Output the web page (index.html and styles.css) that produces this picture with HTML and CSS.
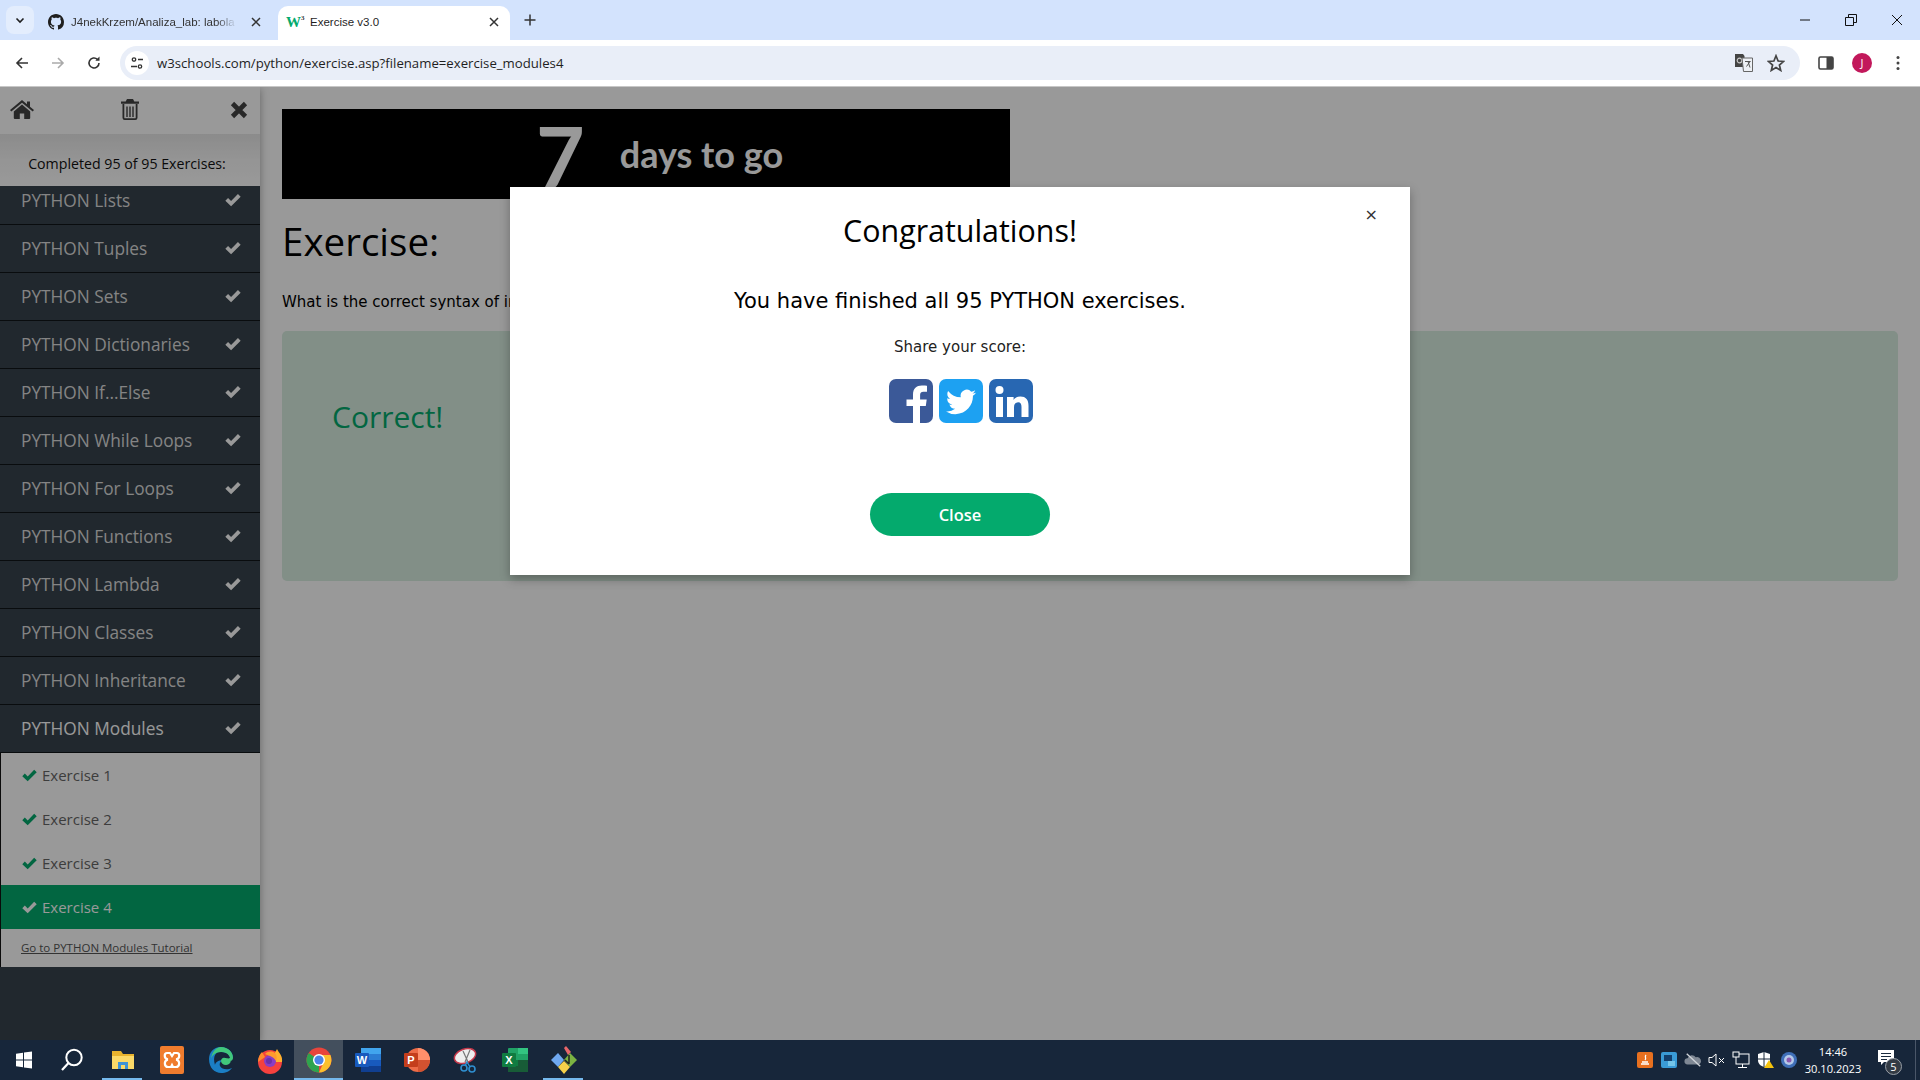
FILE: index.html
```html
<!DOCTYPE html>
<html lang="en">
<head>
<meta charset="utf-8">
<title>Exercise v3.0</title>
<link rel="stylesheet" href="styles.css">
</head>
<body>
<svg class="defs" width="0" height="0" aria-hidden="true">
  <symbol id="check" viewBox="0 0 16 16"><path d="M1.2 8.6 3.6 6.2 6.3 8.9 12.4 2.6 14.8 5 6.3 13.5z" fill="currentColor"/></symbol>
</svg>
<div class="tabbar">
  <div class="tab-expand"><svg width="12" height="12" viewBox="0 0 12 12"><path d="M2.5 4.5 6 8l3.5-3.5" fill="none" stroke="#1f1f1f" stroke-width="1.6"/></svg></div>
  <div class="tab tab-first">
    <svg class="fav" width="16" height="16" viewBox="0 0 16 16"><path fill="#1f1f1f" d="M8 0C3.58 0 0 3.58 0 8c0 3.54 2.29 6.53 5.47 7.59.4.07.55-.17.55-.38 0-.19-.01-.82-.01-1.49-2.01.37-2.53-.49-2.69-.94-.09-.23-.48-.94-.82-1.13-.28-.15-.68-.52-.01-.53.63-.01 1.08.58 1.23.82.72 1.21 1.87.87 2.33.66.07-.52.28-.87.51-1.07-1.78-.2-3.64-.89-3.64-3.95 0-.87.31-1.59.82-2.15-.08-.2-.36-1.02.08-2.12 0 0 .67-.21 2.2.82.64-.18 1.32-.27 2-.27.68 0 1.36.09 2 .27 1.53-1.04 2.2-.82 2.2-.82.44 1.1.16 1.92.08 2.12.51.56.82 1.27.82 2.15 0 3.07-1.87 3.75-3.65 3.95.29.25.54.73.54 1.48 0 1.07-.01 1.93-.01 2.2 0 .21.15.46.55.38A8.013 8.013 0 0 0 16 8c0-4.42-3.58-8-8-8z"/></svg>
    <span class="tab-title fade">J4nekKrzem/Analiza_lab: labola</span>
    <svg class="tab-x" width="12" height="12" viewBox="0 0 12 12"><path d="M2 2l8 8M10 2l-8 8" stroke="#333" stroke-width="1.5"/></svg>
  </div>
  <div class="tab tab-active">
    <span class="w3fav">W<sup>3</sup></span>
    <span class="tab-title">Exercise v3.0</span>
    <svg class="tab-x" width="12" height="12" viewBox="0 0 12 12"><path d="M2 2l8 8M10 2l-8 8" stroke="#333" stroke-width="1.5"/></svg>
  </div>
  <svg class="tab-plus" width="14" height="14" viewBox="0 0 14 14"><path d="M7 1.5v11M1.5 7h11" stroke="#333" stroke-width="1.5"/></svg>
  <div class="win-controls">
    <svg width="14" height="14" viewBox="0 0 14 14"><path d="M2 7h10" stroke="#111" stroke-width="1"/></svg>
    <svg width="14" height="14" viewBox="0 0 14 14"><path d="M1.5 4.5h8v8h-8zM4.5 4.5v-3h8v8h-3" fill="none" stroke="#111"/></svg>
    <svg width="14" height="14" viewBox="0 0 14 14"><path d="M2 2l10 10M12 2 2 12" stroke="#111"/></svg>
  </div>
</div>
<div class="toolbar">
  <div class="nav-btns">
    <svg width="16" height="16" viewBox="0 0 16 16"><path d="M14 8H3M8 3 3 8l5 5" fill="none" stroke="#333" stroke-width="1.6"/></svg>
    <svg width="16" height="16" viewBox="0 0 16 16"><path d="M2 8h11M8 3l5 5-5 5" fill="none" stroke="#aaa" stroke-width="1.6"/></svg>
    <svg width="16" height="16" viewBox="0 0 16 16"><path d="M13 8a5 5 0 1 1-1.6-3.7" fill="none" stroke="#333" stroke-width="1.6"/><path d="M13.5 1.5v4.2H9.3z" fill="#333"/></svg>
  </div>
  <div class="omnibox">
    <span class="site-icon"><svg width="14" height="14" viewBox="0 0 14 14"><circle cx="4" cy="3.5" r="1.7" fill="none" stroke="#333" stroke-width="1.3"/><path d="M8 3.5h5M1 10.5h6" stroke="#333" stroke-width="1.4"/><circle cx="10" cy="10.5" r="1.7" fill="none" stroke="#333" stroke-width="1.3"/></svg></span>
    <span class="url">w3schools.com/python/exercise.asp?filename=exercise_modules4</span>
    <svg class="translate" width="18" height="18" viewBox="0 0 18 18"><path d="M0 0h8l1.500 2v11H0z" fill="#444"/><circle cx="4.500" cy="6.500" r="2.300" fill="none" stroke="#ccc" stroke-width="1.200"/><path d="M7 4h10.500v13.500H8.500z" fill="#eef1f6" stroke="#666"/><path d="M10 7.500h5.500M13 7.500l2 6M15 7.500l-3.500 5" stroke="#555" fill="none"/></svg>
    <svg class="star" width="18" height="18" viewBox="0 0 18 18"><path d="M9 1.800 11.100 7l5.500.4-4.200 3.600 1.300 5.400L9 13.500 4.300 16.400l1.300-5.400L1.400 7.400 6.900 7z" fill="none" stroke="#444" stroke-width="1.700"/></svg>
  </div>
  <div class="tool-right">
    <svg width="16" height="16" viewBox="0 0 16 16"><rect x="1" y="2" width="14" height="12" rx="1.500" fill="none" stroke="#444" stroke-width="1.600"/><rect x="8.500" y="2" width="6.500" height="12" fill="#444"/></svg>
    <span class="avatar">J</span>
    <svg width="16" height="16" viewBox="0 0 16 16"><circle cx="8" cy="2.500" r="1.500" fill="#444"/><circle cx="8" cy="8" r="1.500" fill="#444"/><circle cx="8" cy="13.500" r="1.500" fill="#444"/></svg>
  </div>
</div>
<div class="page">
  <aside class="sidebar">
    <div class="side-icons">
      <svg width="24" height="20" viewBox="0 0 24 20"><path fill="#444" d="M12 4.600 3.800 11.400V18a1 1 0 0 0 1 1h5v-5.500h4.400V19h5a1 1 0 0 0 1-1v-6.600z"/><path fill="#444" d="M12 0 0 10l1.300 1.500L12 2.700l10.700 8.800L24 10l-4-3.300V1.500h-3v2.700z"/></svg>
      <svg class="trash" width="18" height="21" viewBox="0 0 18 21"><path fill="#444" d="M6 0h6l1.300 2.500H18v2.200H0V2.500h4.700z"/><path fill="none" stroke="#444" stroke-width="1.800" d="M2.400 5v13.800c0 .8.600 1.300 1.300 1.300h10.600c.7 0 1.300-.5 1.300-1.300V5"/><path d="M6 7.500V18M9 7.500V18M12 7.500V18" stroke="#444" stroke-width="1.400"/></svg>
      <svg width="18" height="18" viewBox="0 0 18 18"><path d="M2.500 2.500l13 13M15.500 2.500l-13 13" stroke="#444" stroke-width="4.600"/></svg>
    </div>
    <div class="completed">Completed 95 of 95 Exercises:</div>
    <div class="nav-scroll">
      <div class="nav-list">
        <div class="nav-row"><span>PYTHON Lists</span><svg class="nav-check"><use href="#check"/></svg></div>
        <div class="nav-row"><span>PYTHON Tuples</span><svg class="nav-check"><use href="#check"/></svg></div>
        <div class="nav-row"><span>PYTHON Sets</span><svg class="nav-check"><use href="#check"/></svg></div>
        <div class="nav-row"><span>PYTHON Dictionaries</span><svg class="nav-check"><use href="#check"/></svg></div>
        <div class="nav-row"><span>PYTHON If...Else</span><svg class="nav-check"><use href="#check"/></svg></div>
        <div class="nav-row"><span>PYTHON While Loops</span><svg class="nav-check"><use href="#check"/></svg></div>
        <div class="nav-row"><span>PYTHON For Loops</span><svg class="nav-check"><use href="#check"/></svg></div>
        <div class="nav-row"><span>PYTHON Functions</span><svg class="nav-check"><use href="#check"/></svg></div>
        <div class="nav-row"><span>PYTHON Lambda</span><svg class="nav-check"><use href="#check"/></svg></div>
        <div class="nav-row"><span>PYTHON Classes</span><svg class="nav-check"><use href="#check"/></svg></div>
        <div class="nav-row"><span>PYTHON Inheritance</span><svg class="nav-check"><use href="#check"/></svg></div>
        <div class="nav-row nav-open"><span>PYTHON Modules</span><svg class="nav-check"><use href="#check"/></svg></div>
        <div class="sub">
          <div class="sub-row"><svg class="sub-check"><use href="#check"/></svg>Exercise 1</div>
          <div class="sub-row"><svg class="sub-check"><use href="#check"/></svg>Exercise 2</div>
          <div class="sub-row"><svg class="sub-check"><use href="#check"/></svg>Exercise 3</div>
          <div class="sub-row sub-active"><svg class="sub-check"><use href="#check"/></svg>Exercise 4</div>
          <a class="sub-link">Go to PYTHON Modules Tutorial</a>
        </div>
      </div>
    </div>
  </aside>
  <main class="main">
    <div class="banner"><span class="banner-num">7</span><span class="banner-text">days to go</span></div>
    <h2 class="heading">Exercise:</h2>
    <p class="question">What is the correct syntax of importing only the person1 dictionary of the "mymodule" module?</p>
    <div class="result"><span class="correct">Correct!</span></div>
  </main>
  <div class="overlay">
    <div class="modal">
      <span class="modal-x">×</span>
      <h3 class="modal-title">Congratulations!</h3>
      <p class="modal-sub">You have finished all 95 PYTHON exercises.</p>
      <p class="modal-share">Share your score:</p>
      <div class="share-icons">
        <svg width="44" height="44" viewBox="0 0 44 44"><rect width="44" height="44" rx="7" fill="#3b5998"/><path fill="#fff" d="M24 44V27h-6.500v-6.500H24v-5c0-6 3.600-9 8.800-9 2.500 0 4.500.2 5.200.3v6h-3.500c-2.800 0-3.400 1.300-3.400 3.300v4.400h6.600l-.9 6.500H31V44z"/></svg>
        <svg width="44" height="44" viewBox="0 0 44 44"><rect width="44" height="44" rx="7" fill="#1da1f2"/><g transform="translate(7 7) scale(1.875)"><path fill="#fff" d="M5.026 15c6.038 0 9.341-5.003 9.341-9.334 0-.14 0-.282-.006-.422A6.685 6.685 0 0 0 16 3.542a6.658 6.658 0 0 1-1.889.518 3.301 3.301 0 0 0 1.447-1.817 6.533 6.533 0 0 1-2.087.793A3.286 3.286 0 0 0 7.875 6.030a9.325 9.325 0 0 1-6.767-3.429 3.289 3.289 0 0 0 1.018 4.382A3.323 3.323 0 0 1 .64 6.575v.045a3.288 3.288 0 0 0 2.632 3.218 3.203 3.203 0 0 1-.865.115 3.230 3.230 0 0 1-.614-.057 3.283 3.283 0 0 0 3.067 2.277A6.588 6.588 0 0 1 .78 13.580a6.320 6.320 0 0 1-.78-.045A9.344 9.344 0 0 0 5.026 15z"/></g></svg>
        <svg width="44" height="44" viewBox="0 0 44 44"><rect width="44" height="44" rx="7" fill="#2867b2"/><circle cx="10.500" cy="11" r="4" fill="#fff"/><path fill="#fff" d="M7 18h7v20H7zM18 18h6.600v2.900c1.300-2 3.600-3.400 6.800-3.400 5.600 0 8.100 3.400 8.100 9.300V38h-7V28c0-2.900-1-4.700-3.300-4.700-2.500 0-4.200 1.800-4.200 4.900V38h-7z"/></svg>
      </div>
      <button class="close-btn">Close</button>
    </div>
  </div>
</div>
<footer class="taskbar">
  <div class="task-item">
    <svg class="win-logo" width="20" height="20" viewBox="0 0 20 20"><path fill="#fff" d="M2 3.800 9 2.800v6.700H2zM10 2.600 18 1.500v8H10zM2 10.500h7v6.700l-7-1zM10 10.500h8v8l-8-1.100z"/></svg>
  </div>
  <div class="task-item">
    <svg class="search-icon" width="26" height="26" viewBox="0 0 26 26"><circle cx="15" cy="10.500" r="7.700" fill="none" stroke="#fff" stroke-width="2"/><path d="M9.500 16 3 23" stroke="#fff" stroke-width="2.200"/></svg>
  </div>
  <div class="task-item task-open">
    <svg width="24" height="22" viewBox="0 0 24 22"><path fill="#e8b32e" d="M1 2h9l2 3h11v15H1z"/><path fill="#fbd968" d="M1 7h22v13H1z"/><path fill="#3f93d6" d="M7 20v-7h10v7h-3v-4h-4v4z"/></svg>
  </div>
  <div class="task-item">
    <svg width="24" height="28" viewBox="0 0 24 28"><rect width="24" height="28" rx="2" fill="#f07c2e"/><path d="M7 7h3l2 3 2-3h3c3 0 3 5 0 6v1c3 1 3 7-1 7h-3l-1-2-1 2H8c-4 0-4-6-1-7v-1C4 12 4 7 7 7z" fill="none" stroke="#fff" stroke-width="2.200"/></svg>
  </div>
  <div class="task-item">
    <svg width="26" height="28" viewBox="0 0 26 28"><path fill="#1b7ec4" d="M13 1C5 1 1 7 1 13c0 9 6 14 12 14 5 0 9-2 11-5-4 2-10 2-12-2-1-3 1-5 3-6-5 0-8 3-8 5C4 9 9 5 14 6c5 0 8 3 8 6h3C25 6 20 1 13 1z"/><path fill="#41c77b" d="M22 12c2 3 0 7-4 7-3 0-5-2-5-4 0-2 2-4 4-3 2 0 3 1 5 0zM13 1c7 0 12 5 12 11 0 1-1 3-3 3 1-3-1-9-9-9-5 0-9 3-10 7C4 6 8 1 13 1z"/></svg>
  </div>
  <div class="task-item">
    <svg width="26" height="28" viewBox="0 0 26 28"><circle cx="13" cy="16" r="12" fill="#f5413e"/><path d="M20 3c2 4 6 7 5 13H13z" fill="#ffb02e"/><path d="M1 16C1 11 3 8 5 6l3 5z" fill="#ff8a2e"/><circle cx="13" cy="15" r="6" fill="#8a3ec4"/><path d="M8 8c3-3 7-3 10-1 2 2 2 5 1 8-2-4-6-5-11-7z" fill="#ff9a2e"/><circle cx="12" cy="15" r="3" fill="#6e2fa8"/></svg>
  </div>
  <div class="task-item task-open task-current">
    <svg width="26" height="26" viewBox="0 0 26 26"><circle cx="13" cy="13" r="12.500" fill="#e8453c"/><path d="M13 13 2.200 19.300A12.500 12.500 0 0 1 2.700 6z" fill="#2da44e"/><path d="M13 13 13 25.500a12.500 12.500 0 0 1-10.800-6.200L7.500 13z" fill="#2da44e"/><path d="M13 8h11.400A12.500 12.500 0 0 1 13 25.500l5-11z" fill="#fbc02d"/><circle cx="13" cy="13" r="6" fill="#fff"/><circle cx="13" cy="13" r="4.600" fill="#4a84e8"/></svg>
  </div>
  <div class="task-item">
    <svg width="26" height="26" viewBox="0 0 26 26"><rect x="6" y="1" width="20" height="24" rx="1" fill="#2b7cd3"/><rect x="6" y="1" width="20" height="6" fill="#41a5ee"/><rect x="6" y="13" width="20" height="6" fill="#185abd"/><rect x="6" y="19" width="20" height="6" fill="#103f91"/><rect y="6" width="14" height="14" rx="1" fill="#185abd"/><text x="7" y="17" class="app-letter">W</text></svg>
  </div>
  <div class="task-item">
    <svg width="26" height="26" viewBox="0 0 26 26"><circle cx="14" cy="13" r="12" fill="#ed6c47"/><path d="M14 1a12 12 0 0 1 12 12H14z" fill="#ff8f6b"/><path d="M14 13h12a12 12 0 0 1-12 12z" fill="#d35230"/><rect y="6" width="14" height="14" rx="1" fill="#c43e1c"/><text x="7" y="17" class="app-letter">P</text></svg>
  </div>
  <div class="task-item">
    <svg width="26" height="28" viewBox="0 0 26 28"><ellipse cx="12" cy="10" rx="11" ry="7" fill="#eee" stroke="#c4384a" stroke-width="1.500" transform="rotate(-20 12 10)"/><path d="M10 5l5 11M17 4l-5 12" stroke="#777" stroke-width="1.200"/><circle cx="11" cy="22" r="3" fill="none" stroke="#2f8fd0" stroke-width="1.600"/><circle cx="19" cy="23" r="3" fill="none" stroke="#2f8fd0" stroke-width="1.600"/><path d="M12 20l2-4 3 5" fill="none" stroke="#2f8fd0" stroke-width="1.400"/></svg>
  </div>
  <div class="task-item">
    <svg width="26" height="26" viewBox="0 0 26 26"><rect x="6" y="1" width="20" height="24" rx="1" fill="#21a366"/><rect x="16" y="1" width="10" height="6" fill="#33c481"/><rect x="6" y="13" width="10" height="6" fill="#107c41"/><rect x="16" y="13" width="10" height="6" fill="#185c37"/><rect x="6" y="19" width="20" height="6" fill="#185c37"/><rect y="6" width="14" height="14" rx="1" fill="#107c41"/><text x="7" y="17" class="app-letter">X</text></svg>
  </div>
  <div class="task-item task-open">
    <svg width="26" height="28" viewBox="0 0 26 28"><path fill="#e8666a" d="M13 2l2-2 5 6-3 3z"/><path fill="#6fa8f0" d="M7 7l6 7-6 7-7-7z"/><path fill="#7cb342" d="M19 7l7 7-7 7-6-7z"/><path fill="#f7d04a" d="M13 15l6 6-6 7-6-7z"/><path d="M18 9v9M14 14l4 4" stroke="#222" stroke-width="1.500"/></svg>
  </div>
  <div class="tray">
    <svg width="18" height="18" viewBox="0 0 18 18"><rect width="16" height="16" y="1" x="1" rx="2" fill="#e8701f"/><path d="M5 13h8M6 11h6M10 4c-2 2 1 3-1 5" stroke="#fff" fill="none" stroke-width="1.300"/></svg>
    <svg width="18" height="18" viewBox="0 0 18 18"><rect x="1" y="1" width="16" height="16" rx="2" fill="#3a9bd6"/><rect x="4" y="4" width="8" height="6" fill="#123f6d"/><rect x="8" y="10" width="7" height="5" fill="#74c4e8"/></svg>
    <svg width="18" height="18" viewBox="0 0 20 18"><path d="M4 14a3.500 3.500 0 0 1 0-7 5 5 0 0 1 9-1 4 4 0 0 1 3 8z" fill="#7f8894"/><path d="M3 2l15 14" stroke="#cfd3d8" stroke-width="1.500"/></svg>
    <svg width="18" height="18" viewBox="0 0 18 18"><path d="M1 6.500h3L8 3v12l-4-3.500H1z" fill="none" stroke="#fff"/><path d="M11 7l5 5M16 7l-5 5" stroke="#fff"/></svg>
    <svg width="18" height="18" viewBox="0 0 18 18"><rect x="4" y="3" width="13" height="10" fill="none" stroke="#fff"/><rect x="1" y="1" width="6" height="5" fill="#1a2a3d" stroke="#fff"/><path d="M10.500 13v3M6 16.500h9" stroke="#fff"/></svg>
    <svg width="18" height="18" viewBox="0 0 18 18"><path d="M8 1l6 2v6c0 4-3 6-6 7-3-1-6-3-6-7V3z" fill="#fff"/><path d="M8 1v15M2 8h12" stroke="#1a2a3d"/><path d="M13 9l5 8H8z" fill="#f4c20d"/></svg>
    <svg width="18" height="18" viewBox="0 0 18 18"><circle cx="9" cy="9" r="8" fill="#3f6fb8"/><circle cx="9" cy="9" r="5" fill="#b6c9e8"/><circle cx="9" cy="9" r="2.500" fill="#8a58b0"/></svg>
    <div class="clock"><span>14:46</span><span>30.10.2023</span></div>
    <div class="notif">
      <svg class="notif-icon" width="18" height="16" viewBox="0 0 18 16"><path d="M0 0h16v12H6l-3 3v-3H0z" fill="#fff"/><path d="M3 3.500h10M3 6.500h10M3 9.500h6" stroke="#1a2a3d"/></svg>
      <span class="notif-badge">5</span>
    </div>
    <div class="show-desktop"></div>
  </div>
</footer>
</body>
</html>
```
FILE: styles.css
```css
* { box-sizing: border-box; }
html, body { height: 100%; }
body {
  margin: 0;
  height: 1080px;
  overflow: hidden;
  display: flex;
  flex-direction: column;
  font-family: "Open Sans", sans-serif;
  background: #fff;
}
.defs { position: absolute; }

/* browser chrome */
.tabbar {
  height: 40px;
  flex: none;
  background: #d3e3fd;
  display: flex;
  align-items: flex-end;
  padding-left: 6px;
}
.tab-expand {
  width: 28px;
  height: 28px;
  margin-bottom: 6px;
  margin-right: 6px;
  border-radius: 8px;
  background: #e3edfd;
  display: flex;
  align-items: center;
  justify-content: center;
}
.tab {
  width: 232px;
  height: 34px;
  display: flex;
  align-items: center;
  padding: 0 10px 2px 6px;
  font-size: 12px;
  color: #333;
}
.tab-first { width: 238px; padding: 0 16px 2px 8px; }
.tab-active {
  background: #fff;
  border-radius: 10px 10px 0 0;
  color: #1f1f1f;
  padding-left: 8px;
}
.fav { flex: none; margin-right: 7px; }
.w3fav {
  flex: none;
  width: 20px;
  margin-right: 4px;
  font: bold 15px "Liberation Serif", serif;
  color: #04aa6d;
  line-height: 1;
}
.w3fav sup { font-size: 7px; color: #333; vertical-align: 7px; line-height: 0; }
.tab-title {
  flex: 1;
  white-space: nowrap;
  overflow: hidden;
  font-family: "Liberation Sans", sans-serif;
  font-size: 11.5px;
}
.fade { -webkit-mask-image: linear-gradient(90deg, #000 85%, transparent 97%); mask-image: linear-gradient(90deg, #000 85%, transparent 97%); }
.tab-x { flex: none; margin-left: 8px; }
.tab-plus { margin: 0 0 13px 13px; }
.win-controls {
  margin-left: auto;
  height: 40px;
  width: 138px;
  display: flex;
  align-items: center;
  justify-content: space-between;
  padding: 0 16px 0 16px;
}
.toolbar {
  height: 47px;
  flex: none;
  background: #fff;
  border-bottom: 1px solid #c7c7c7;
  border-radius: 8px 8px 0 0;
  display: flex;
  align-items: center;
  padding-bottom: 1px;
}
.nav-btns {
  width: 120px;
  flex: none;
  display: flex;
  justify-content: space-between;
  padding: 0 18px 0 14px;
}
.omnibox {
  width: 1680px;
  height: 34px;
  flex: none;
  background: #e9eef8;
  border-radius: 17px;
  display: flex;
  align-items: center;
  padding: 0 15px 0 5px;
}
.site-icon {
  width: 24px;
  height: 24px;
  background: #fff;
  border-radius: 50%;
  display: flex;
  align-items: center;
  justify-content: center;
  margin-right: 8px;
}
.url {
  flex: 1;
  font-family: "Open Sans", sans-serif;
  font-size: 13.2px;
  color: #1f1f1f;
}
.translate { margin-right: 14px; }
.tool-right {
  flex: 1;
  display: flex;
  align-items: center;
  justify-content: space-between;
  padding: 0 14px 0 18px;
}
.avatar {
  width: 20px;
  height: 20px;
  border-radius: 50%;
  background: #c2185b;
  color: #fff;
  font-size: 11px;
  display: flex;
  align-items: center;
  justify-content: center;
}

/* page */
.page {
  flex: 1;
  min-height: 0;
  position: relative;
  display: flex;
  background: #fff;
  overflow: hidden;
}
.sidebar {
  width: 260px;
  flex: none;
  background: #38444d;
  display: flex;
  flex-direction: column;
  box-shadow: 0 2px 8px rgba(0,0,0,.35);
  position: relative;
}
.side-icons {
  height: 47px;
  flex: none;
  background: #fff;
  display: flex;
  align-items: center;
  justify-content: space-between;
  padding: 0 12px 2px 10px;
}
.trash { margin-left: -4px; }
.completed {
  height: 52px;
  flex: none;
  background: linear-gradient(#e8e8e8, #f8f8f8 50%, #fff);
  display: flex;
  align-items: center;
  justify-content: center;
  font-size: 14.2px;
  color: #111;
  padding: 6px 6px 0 0;
}
.nav-scroll { flex: 1; overflow: hidden; }
.nav-list { margin-top: -9px; }
.nav-row {
  height: 48px;
  border-bottom: 1px solid #101418;
  display: flex;
  align-items: center;
  justify-content: space-between;
  padding: 0 18px 0 21px;
  color: #ddd;
  font-size: 17.3px;
}
.nav-open { color: #fff; font-weight: 500; }
.nav-check { width: 18px; height: 18px; color: #fff; margin-top: -2px; }
.sub {
  background: #fff;
  border-left: 1px solid #111;
  display: flex;
  flex-direction: column;
  color: #666;
  font-size: 15px;
}
.sub-row {
  height: 44px;
  display: flex;
  align-items: center;
  padding-left: 20px;
}
.sub-check { width: 17px; height: 17px; margin-right: 4px; color: #04aa6d; }
.sub-active { background: #04aa6d; color: #fff; }
.sub-active .sub-check { color: #fff; }
.sub-link {
  height: 38px;
  padding: 11px 0 0 20px;
  font-size: 11.5px;
  color: #555;
  text-decoration: underline;
}

.main {
  flex: 1;
  min-width: 0;
  padding: 22px 22px 0;
  overflow: hidden;
}
.banner {
  width: 728px;
  height: 90px;
  background: #000;
  overflow: hidden;
  display: flex;
  align-items: flex-start;
  padding-left: 254px;
  color: #fff;
  font-family: Lato, sans-serif;
}
.banner-num { font-size: 84px; font-weight: 700; line-height: 84px; margin-top: 5px; }
.banner-text { font-size: 36px; font-weight: 700; margin-left: 35px; margin-top: 22px; line-height: 46px; }
.heading {
  margin: 14px 0 0;
  font-size: 38.5px;
  font-weight: 400;
  line-height: 56px;
  color: #000;
}
.question {
  margin: 21px 0 0;
  font: 15px/24px "DejaVu Sans", sans-serif;
  color: #000;
  white-space: nowrap;
}
.result {
  margin-top: 17px;
  height: 250px;
  background: #d9eee1;
  border-radius: 5px;
  padding: 64px 50px 0;
}
.correct { font-size: 30px; color: #04aa6d; line-height: 44px; }

.overlay {
  position: absolute;
  inset: 0;
  background: rgba(0,0,0,.4);
  padding-top: 100px;
}
.modal {
  position: relative;
  width: 900px;
  height: 388px;
  margin: 0 auto;
  background: #fff;
  box-shadow: 0 4px 10px rgba(0,0,0,.3);
  display: flex;
  flex-direction: column;
  align-items: center;
  color: #000;
}
.modal-x {
  position: absolute;
  right: 32px;
  top: 16px;
  font: 16px/24px "DejaVu Sans", sans-serif;
  color: #333;
}
.modal-title { margin: 20px 0 0; font-size: 30.4px; font-weight: 400; line-height: 48px; }
.modal-sub { margin: 30px 0 0; font: 21px/32px "DejaVu Sans", sans-serif; }
.modal-share { margin: 18px 0 0; font: 15px/24px "DejaVu Sans", sans-serif; color: #222; }
.share-icons { display: flex; gap: 6px; margin-top: 20px; height: 44px; padding-left: 1px; }
.close-btn {
  margin-top: 70px;
  width: 180px;
  height: 43px;
  border: 0;
  border-radius: 22px;
  background: #04aa6d;
  color: #fff;
  font: 600 16.5px "Open Sans", sans-serif;
}

/* taskbar */
.taskbar {
  height: 40px;
  flex: none;
  background: #17263a;
  display: flex;
  align-items: stretch;
  position: relative;
}
.task-item {
  width: 49px;
  flex: none;
  display: flex;
  align-items: center;
  justify-content: center;
  position: relative;
}
.win-logo { margin-right: 1px; }
.search-icon { margin-right: 3px; }
.task-open::after {
  content: "";
  position: absolute;
  bottom: 0;
  left: 4px;
  right: 5px;
  height: 2px;
  background: #76b9ed;
}
.task-current { background: #434f5d; }
.task-current::after { left: 0; right: 0; }
.app-letter { font: bold 11px "Liberation Sans", sans-serif; fill: #fff; text-anchor: middle; }
.tray {
  margin-left: auto;
  display: flex;
  align-items: center;
  gap: 6px;
  color: #fff;
}
.clock {
  width: 58px;
  display: flex;
  flex-direction: column;
  align-items: center;
  font-size: 11.1px;
  line-height: 17px;
  white-space: nowrap;
}
.notif { width: 36px; margin-left: 1px; position: relative; height: 26px; display: flex; align-items: center; justify-content: center; }
.notif-icon { margin-top: -4px; }
.notif-badge {
  position: absolute;
  left: 16px;
  top: 11px;
  width: 17px;
  height: 17px;
  border-radius: 50%;
  background: #333b45;
  border: 1px solid #9aa0a8;
  font-size: 11px;
  line-height: 15px;
  text-align: center;
}
.show-desktop { width: 5px; height: 40px; margin-left: 4px; border-left: 1px solid #4a5668; }
```
